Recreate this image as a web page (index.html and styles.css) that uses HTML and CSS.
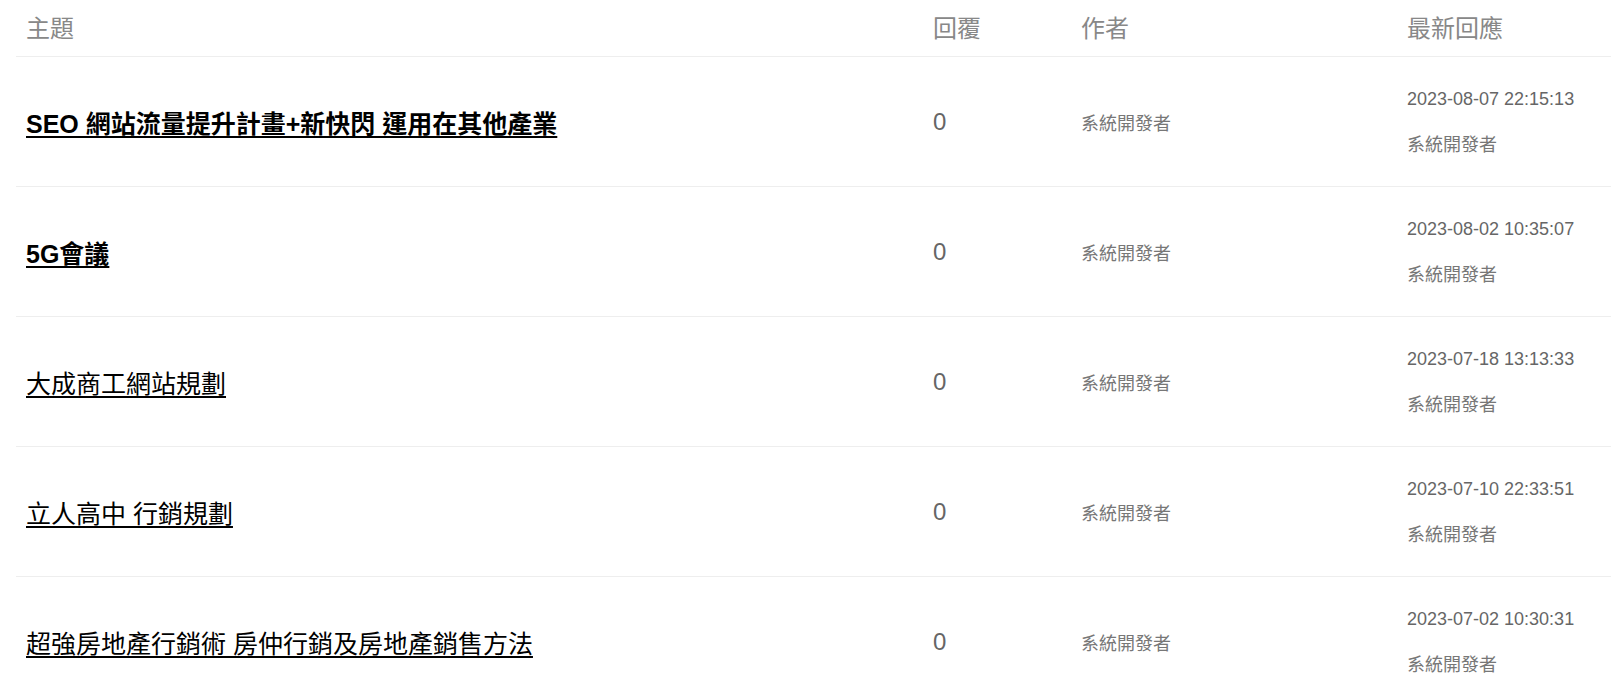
FILE: index.html
```html
<!DOCTYPE html>
<html lang="zh-Hant">
<head>
<meta charset="utf-8">
<title>討論區</title>
<link rel="stylesheet" href="styles.css">
</head>
<body>
<div class="wrap">
<table class="topics">
  <colgroup>
    <col class="c-title">
    <col class="c-reply">
    <col class="c-author">
    <col class="c-latest">
  </colgroup>
  <thead>
    <tr>
      <th>主題</th>
      <th>回覆</th>
      <th>作者</th>
      <th>最新回應</th>
    </tr>
  </thead>
  <tbody>
    <tr>
      <td class="title"><a href="#" class="strong">SEO 網站流量提升計畫+新快閃 運用在其他產業</a></td>
      <td class="num">0</td>
      <td class="author">系統開發者</td>
      <td class="latest"><div class="date">2023-08-07 22:15:13</div><div class="who">系統開發者</div></td>
    </tr>
    <tr>
      <td class="title"><a href="#" class="strong">5G會議</a></td>
      <td class="num">0</td>
      <td class="author">系統開發者</td>
      <td class="latest"><div class="date">2023-08-02 10:35:07</div><div class="who">系統開發者</div></td>
    </tr>
    <tr>
      <td class="title"><a href="#">大成商工網站規劃</a></td>
      <td class="num">0</td>
      <td class="author">系統開發者</td>
      <td class="latest"><div class="date">2023-07-18 13:13:33</div><div class="who">系統開發者</div></td>
    </tr>
    <tr>
      <td class="title"><a href="#">立人高中 行銷規劃</a></td>
      <td class="num">0</td>
      <td class="author">系統開發者</td>
      <td class="latest"><div class="date">2023-07-10 22:33:51</div><div class="who">系統開發者</div></td>
    </tr>
    <tr>
      <td class="title"><a href="#">超強房地產行銷術 房仲行銷及房地產銷售方法</a></td>
      <td class="num">0</td>
      <td class="author">系統開發者</td>
      <td class="latest"><div class="date">2023-07-02 10:30:31</div><div class="who">系統開發者</div></td>
    </tr>
  </tbody>
</table>
</div>
</body>
</html>
```

FILE: styles.css
```css
html, body {
  margin: 0;
  padding: 0;
  background: #fff;
}
body {
  font-family: "Liberation Sans", "Noto Sans CJK TC", sans-serif;
  color: #666;
}
.wrap {
  padding-left: 16px;
}
.topics {
  width: 1595px;
  border-collapse: collapse;
  table-layout: fixed;
}
.c-title { width: 907px; }
.c-reply { width: 148px; }
.c-author { width: 326px; }
.c-latest { width: 214px; }

.topics th {
  text-align: left;
  font-weight: normal;
  font-size: 24px;
  line-height: 32px;
  color: #888;
  padding: 13px 10px 11px 10px;
  border-bottom: 1px solid #eee;
}
.topics td {
  height: 129px;
  padding: 0 10px;
  vertical-align: middle;
  border-bottom: 1px solid #eee;
}
.title a {
  color: #000;
  font-size: 25px;
  text-decoration: underline;
  text-underline-offset: 3px;
}
.title a.strong {
  font-weight: bold;
}
.num {
  font-size: 24px;
  color: #666;
}
.author {
  font-size: 18px;
  color: #777;
}
.latest .date {
  font-size: 18px;
  color: #666;
  line-height: 24px;
}
.latest .who {
  font-size: 18px;
  color: #777;
  line-height: 24px;
  margin-top: 22px;
}
```
